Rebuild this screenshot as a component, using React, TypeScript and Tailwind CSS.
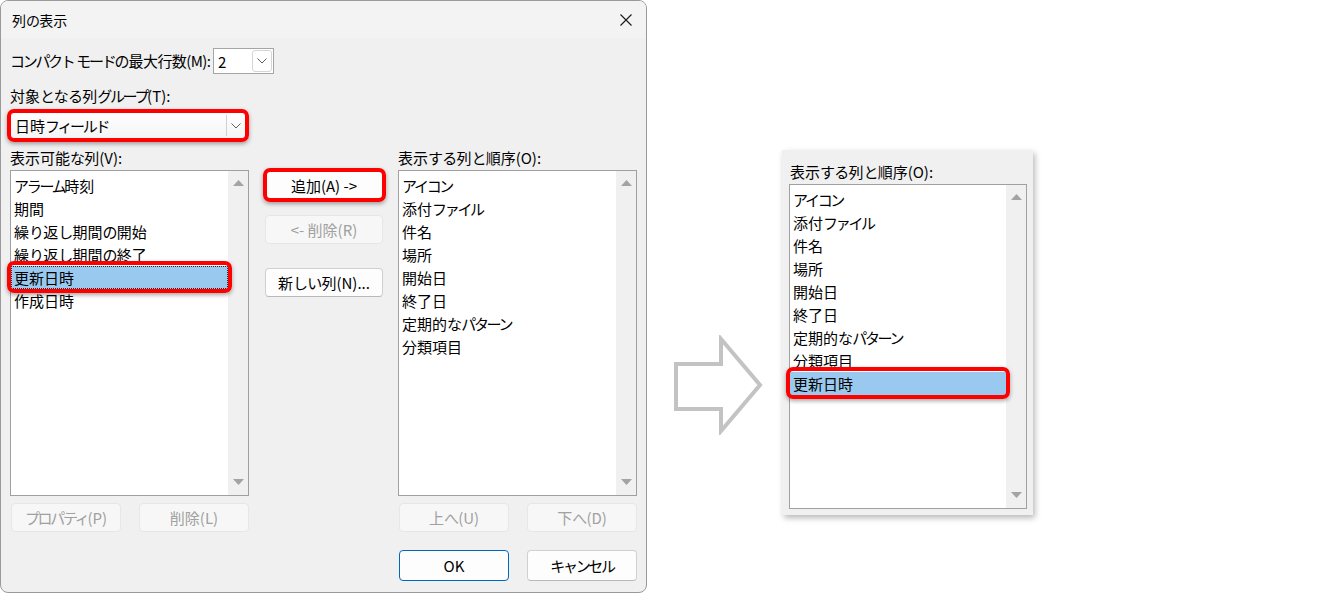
import React from "react";

const leftItems = ["アラーム時刻", "期間", "繰り返し期間の開始", "繰り返し期間の終了", "更新日時", "作成日時"];
const rightItems = ["アイコン", "添付ファイル", "件名", "場所", "開始日", "終了日", "定期的なパターン", "分類項目"];
const panelItems = [...rightItems, "更新日時"];

/* Narrow the kana runs, as Yu Gothic UI sets kana proportionally */
function J({ t }: { t: string }) {
  const runs: { k: number; s: string }[] = [];
  for (const c of t) {
    const code = c.charCodeAt(0);
    const k = code >= 0x30a0 && code <= 0x30ff ? 2 : code >= 0x3040 && code <= 0x309f ? 1 : 0;
    const last = runs[runs.length - 1];
    if (last && last.k === k) last.s += c;
    else runs.push({ k, s: c });
  }
  return (
    <>
      {runs.map((r, i) =>
        r.k === 2 ? (
          <span key={i} className="tracking-[-2.3px]">
            {r.s}
          </span>
        ) : r.k === 1 ? (
          <span key={i} className="tracking-[-0.8px]">
            {r.s}
          </span>
        ) : (
          <React.Fragment key={i}>{r.s}</React.Fragment>
        )
      )}
    </>
  );
}

function RedBox({ className }: { className: string }) {
  return (
    <span
      className={
        "pointer-events-none absolute rounded-[7px] border-4 border-[#ff0000] shadow-[0_2px_4px_rgba(0,0,0,0.35)] " +
        className
      }
    />
  );
}

function Tri({ up }: { up: boolean }) {
  return (
    <svg width="11" height="6" viewBox="0 0 11 6">
      <path d={up ? "M0 6 L5.5 0 L11 6 Z" : "M0 0 L5.5 6 L11 0 Z"} fill="#a3a3a3" />
    </svg>
  );
}

function Chevron() {
  return (
    <svg width="10" height="6" viewBox="0 0 10 6">
      <path d="M0.5 0.5 L5 5 L9.5 0.5" fill="none" stroke="#606060" strokeWidth="1" />
    </svg>
  );
}

function ListBox({
  items,
  selected,
  focused,
  size,
}: {
  items: string[];
  selected?: number;
  focused?: boolean;
  size: string;
}) {
  return (
    <div className={"flex border border-[#a0a0a0] bg-white " + size}>
      <div className="flex-1 pt-[3px]">
        {items.map((it, i) => (
          <div
            key={i}
            className={
              "relative h-[23px] whitespace-nowrap pl-[3px] leading-[23px] " +
              (i === selected
                ? focused
                  ? "bg-[#99c9ef] outline-1 outline-dotted outline-[#2a2a2a] -outline-offset-1"
                  : "bg-[#99c9ef]"
                : "")
            }
          >
            <J t={it} />
            {i === selected && <RedBox className="-top-[5px] -bottom-[4px] -left-[4px] -right-[4px]" />}
          </div>
        ))}
      </div>
      <div className="flex w-[20px] flex-col items-center justify-between bg-[#f0f0f0] pt-[9px] pb-[10px]">
        <Tri up={true} />
        <Tri up={false} />
      </div>
    </div>
  );
}

function Btn({
  children,
  disabled,
  primary,
  className,
}: {
  children: React.ReactNode;
  disabled?: boolean;
  primary?: boolean;
  className: string;
}) {
  const look = disabled
    ? "border-[#e6e6e6] bg-[#f7f7f7] text-[#a0a0a0]"
    : primary
    ? "border-[#0067c0] bg-[#fdfdfd] text-black"
    : "border-[#d0d0d0] border-b-[#b8b8b8] bg-[#fdfdfd] text-black";
  return (
    <div
      className={
        "relative flex items-center justify-center whitespace-nowrap rounded-[4px] border text-[15px] leading-none " +
        look +
        " " +
        className
      }
    >
      {children}
    </div>
  );
}

function Arrow() {
  return (
    <svg width="92" height="100" viewBox="0 0 92 100" className="ml-[25px] mt-[335px] shrink-0">
      <path
        d="M4 29 L49 29 L49 4 L88 50 L49 96 L49 74 L4 74 Z"
        fill="none"
        stroke="#c3c3c3"
        strokeWidth="4"
        strokeLinejoin="miter"
      />
    </svg>
  );
}

export default function App() {
  return (
    <div className="flex h-[593px] w-[1344px] items-start overflow-hidden bg-white font-['Noto_Sans_CJK_JP','Noto_Sans',sans-serif] text-[15px] text-black">
      {/* Dialog */}
      <div className="flex h-[593px] w-[647px] shrink-0 flex-col overflow-hidden rounded-[8px] border border-[#9a9a9a] bg-[#f0f0f0]">
        {/* Title bar */}
        <div className="flex h-[37px] items-center justify-between bg-[#f3f3f3] pl-[11px] pr-[14px]">
          <span className="text-[14px] leading-none">
            <J t="列の表示" />
          </span>
          <svg width="12" height="12" viewBox="0 0 12 12">
            <path d="M0.5 0.5 L11.5 11.5 M11.5 0.5 L0.5 11.5" stroke="#1a1a1a" strokeWidth="1.1" />
          </svg>
        </div>

        <div className="flex flex-col px-[9px]">
          {/* Row 1 */}
          <div className="mt-[10px] flex h-[26px] items-center">
            <div className="w-[203px] shrink-0 whitespace-nowrap leading-[20px] tracking-[-0.6px]">
              <J t="コンパクト モードの最大行数(M):" />
            </div>
            <div className="flex h-[26px] w-[61px] shrink-0 items-center justify-between border border-[#a5a5a5] bg-white pl-[4px] pr-[1px]">
              <span className="leading-none">2</span>
              <div className="flex h-[22px] w-[20px] items-center justify-center rounded-[3px] border border-[#d5d5d5] bg-white">
                <Chevron />
              </div>
            </div>
          </div>

          {/* Row 2 */}
          <div className="mt-[12px] h-[20px] leading-[20px]">
            <J t="対象となる列グループ(T):" />
          </div>

          {/* Combo */}
          <div className="relative mt-[6px] flex h-[27px] w-[236px] items-center border border-[#b8b8b8] bg-gradient-to-b from-white to-[#f4f4f4]">
            <span className="flex-1 pl-[4px] leading-none">
              <J t="日時フィールド" />
            </span>
            <div className="flex h-[21px] w-[19px] items-center justify-center border-l border-[#d0d0d0]">
              <Chevron />
            </div>
            <RedBox className="-top-[4px] -bottom-[4px] -left-[4px] -right-[4px]" />
          </div>

          {/* Columns */}
          <div className="mt-[9px] flex">
            {/* Left column */}
            <div className="flex w-[239px] flex-col">
              <div className="h-[20px] leading-[20px]">
                <J t="表示可能な列(V):" />
              </div>
              <div className="mt-[2px]">
                <ListBox items={leftItems} selected={4} focused={true} size="h-[326px] w-[239px]" />
              </div>
              <div className="mt-[7px] flex gap-[18px] pl-[1px]">
                <Btn disabled className="h-[29px] w-[110px]">
                  <J t="プロパティ(P)" />
                </Btn>
                <Btn disabled className="h-[29px] w-[110px]">削除(L)</Btn>
              </div>
            </div>

            {/* Middle column */}
            <div className="ml-[16px] flex w-[118px] flex-col">
              <Btn className="mt-[23px] h-[28px] w-[118px]">
                追加(A) -&gt;
                <RedBox className="-top-[4px] -bottom-[4px] -left-[3px] -right-[4px]" />
              </Btn>
              <Btn disabled className="mt-[16px] h-[29px] w-[118px]">&lt;- 削除(R)</Btn>
              <Btn className="mt-[24px] h-[29px] w-[118px]">
                <J t="新しい列(N)..." />
              </Btn>
            </div>

            {/* Right column */}
            <div className="ml-[15px] flex w-[239px] flex-col">
              <div className="h-[20px] leading-[20px]">
                <J t="表示する列と順序(O):" />
              </div>
              <div className="mt-[2px]">
                <ListBox items={rightItems} size="h-[326px] w-[239px]" />
              </div>
              <div className="mt-[7px] flex gap-[18px] pl-[1px]">
                <Btn disabled className="h-[29px] w-[110px]">
                  <J t="上へ(U)" />
                </Btn>
                <Btn disabled className="h-[29px] w-[110px]">
                  <J t="下へ(D)" />
                </Btn>
              </div>
            </div>
          </div>

          {/* OK / Cancel */}
          <div className="mt-[18px] flex justify-end gap-[18px]">
            <Btn primary className="h-[31px] w-[110px]">OK</Btn>
            <Btn className="h-[31px] w-[110px]">
              <J t="キャンセル" />
            </Btn>
          </div>
        </div>
      </div>

      {/* Arrow */}
      <Arrow />

      {/* Result panel */}
      <div className="ml-[18px] mt-[150px] flex h-[365px] w-[251px] shrink-0 flex-col bg-[#f0f0f0] pl-[7px] pt-[12px] shadow-[2px_3px_6px_rgba(0,0,0,0.28)]">
        <div className="h-[20px] pl-[1px] leading-[20px]">
          <J t="表示する列と順序(O):" />
        </div>
        <div className="mt-[2px]">
          <ListBox items={panelItems} selected={8} size="h-[325px] w-[238px]" />
        </div>
      </div>
    </div>
  );
}
